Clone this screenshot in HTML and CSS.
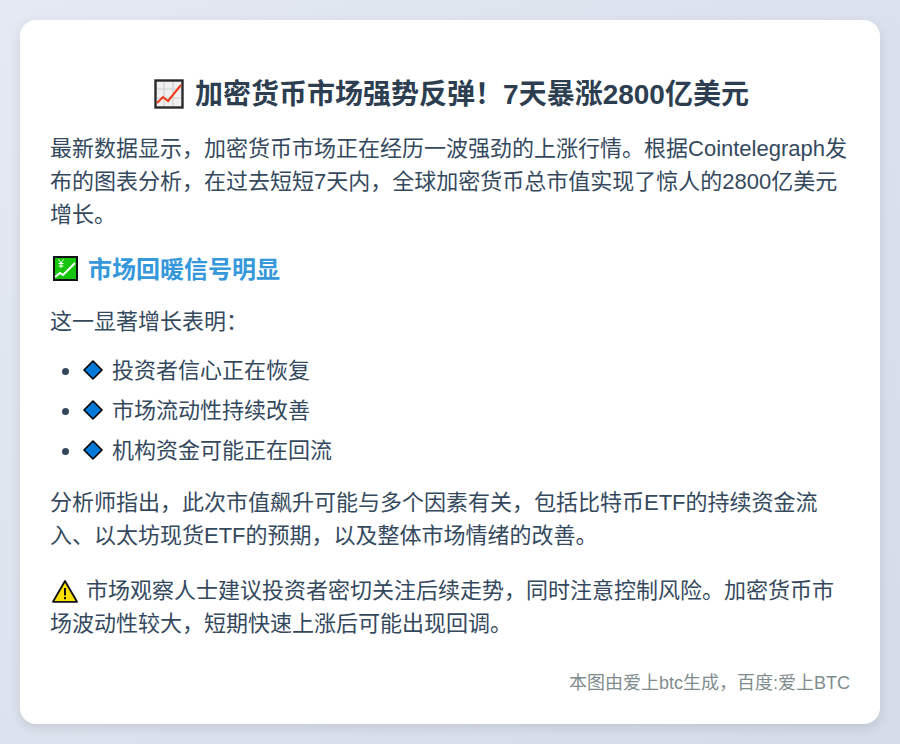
FILE: index.html
```html
<!DOCTYPE html>
<html lang="zh-CN">
<head>
<meta charset="utf-8">
<title>加密货币市场强势反弹</title>
<link rel="stylesheet" href="styles.css">
</head>
<body>
<main class="card">
  <h1 class="title"><svg class="icon icon-chart" viewBox="0 0 30 30" aria-hidden="true"><rect x="1.5" y="1.5" width="27" height="27" fill="#f0f0f0" stroke="#2a2a2a" stroke-width="2.4"/><path d="M10 3v24M19 3v24M3 10h24M3 19h24" stroke="#d0d0d0" stroke-width="1.2" fill="none"/><path d="M3 24l6-6 5 4L27 6" stroke="#f03a17" stroke-width="2" fill="none"/></svg>加密货币市场强势反弹！7天暴涨2800亿美元</h1>
  <p class="text">最新数据显示，加密货币市场正在经历一波强劲的上涨行情。根据Cointelegraph发布的图表分析，在过去短短7天内，全球加密货币总市值实现了惊人的2800亿美元增长。</p>
  <h2 class="subtitle"><svg class="icon icon-yen" viewBox="0 0 25 25" aria-hidden="true"><rect x="1" y="1" width="23" height="23" fill="#16c60c" stroke="#111" stroke-width="2"/><path d="M5.5 3.500L8 7l2.500-3.500M8 7v5M5.500 7.500h5M5.500 10h5" stroke="#fff" stroke-width="1" fill="none"/><path d="M2 21l5-4 3 2L22 7" stroke="#fff" stroke-width="2" fill="none"/></svg>市场回暖信号明显</h2>
  <p class="text">这一显著增长表明：</p>
  <ul class="list">
    <li class="item"><svg class="icon icon-gem" viewBox="0 0 20 20" aria-hidden="true"><path d="M10 1l9 9-9 9-9-9z" fill="#0078d7" stroke="#000" stroke-width="1.6" stroke-linejoin="round"/></svg>投资者信心正在恢复</li>
    <li class="item"><svg class="icon icon-gem" viewBox="0 0 20 20" aria-hidden="true"><path d="M10 1l9 9-9 9-9-9z" fill="#0078d7" stroke="#000" stroke-width="1.6" stroke-linejoin="round"/></svg>市场流动性持续改善</li>
    <li class="item"><svg class="icon icon-gem" viewBox="0 0 20 20" aria-hidden="true"><path d="M10 1l9 9-9 9-9-9z" fill="#0078d7" stroke="#000" stroke-width="1.6" stroke-linejoin="round"/></svg>机构资金可能正在回流</li>
  </ul>
  <p class="text">分析师指出，此次市值飙升可能与多个因素有关，包括比特币ETF的持续资金流入、以太坊现货ETF的预期，以及整体市场情绪的改善。</p>
  <p class="text note"><svg class="icon icon-warn" viewBox="0 0 26 24" aria-hidden="true"><path d="M13 2L25 22.800H1z" fill="#fce100" stroke="#111" stroke-width="1.800" stroke-linejoin="round"/><path d="M13 9v7.500M13 18v2.200" stroke="#111" stroke-width="2" fill="none"/></svg>市场观察人士建议投资者密切关注后续走势，同时注意控制风险。加密货币市场波动性较大，短期快速上涨后可能出现回调。</p>
  <footer class="foot">本图由爱上btc生成，百度:爱上BTC</footer>
</main>
</body>
</html>
```
FILE: styles.css
```css
* { box-sizing: border-box; }
html, body { margin: 0; height: 100%; }
body {
  padding: 20px;
  background: linear-gradient(135deg, #e4e9f3 0%, #d3dce8 100%);
  font-family: "Liberation Sans", "Noto Sans CJK SC", sans-serif;
  color: #34495e;
  font-size: 22px;
  line-height: 1.5;
}
.card {
  height: 704px;
  padding: 30px;
  background: #fff;
  border-radius: 16px;
  box-shadow: 0 4px 12px rgba(0, 0, 0, 0.1);
}
.icon-chart { width: 30px; height: 30px; margin-right: 11px; vertical-align: -5px; }
.icon-yen { width: 25px; height: 25px; margin: 0 10px 0 3px; vertical-align: -3px; }
.icon-gem { width: 20px; height: 20px; margin: 0 9px 0 1px; vertical-align: -2px; }
.icon-warn { width: 26px; height: 24px; margin: 0 8px 0 2px; vertical-align: -5px; }
.title {
  margin: 24px 0 16px;
  padding-left: 3px;
  font-size: 28px;
  line-height: 1.5;
  font-weight: 700;
  text-align: center;
  color: #2c3e50;
}
.text { margin: 0 0 15px; }
.subtitle {
  margin: 21px 0 17px;
  font-size: 24px;
  line-height: 1.5;
  font-weight: 700;
  color: #3498db;
}
.list { margin: 16px 0 19px; padding-left: 32px; }
.item { margin-bottom: 7px; }
.note { margin-top: 22px; }
.foot {
  margin-top: 30px;
  text-align: right;
  font-size: 18px;
  color: #7f8c8d;
}
```
